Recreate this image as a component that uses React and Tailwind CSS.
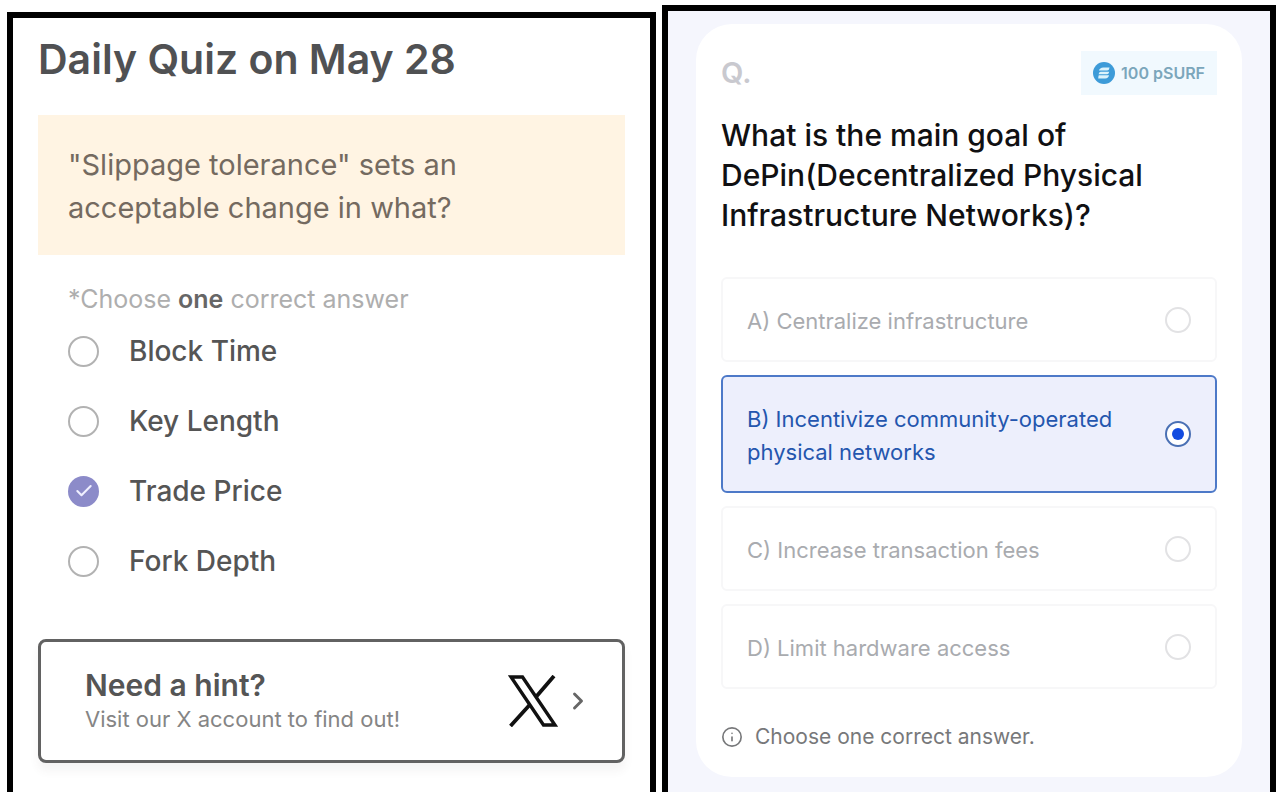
import { useState } from "react";
import { Check, ChevronRight, Info } from "lucide-react";

const dailyAnswers = ["Block Time", "Key Length", "Trade Price", "Fork Depth"];

const surfAnswers = [
  "A) Centralize infrastructure",
  "B) Incentivize community-operated physical networks",
  "C) Increase transaction fees",
  "D) Limit hardware access",
];

function XLogo() {
  return (
    <svg viewBox="0 0 50 52" className="h-[52px] w-[50px]" fill="none" stroke="#111" aria-hidden="true">
      <path d="M3 2H14.5L47 50H35.5Z" strokeWidth="3.4" />
      <path d="M46 1L27.5 22.5M22 29.5L2.5 51" strokeWidth="3.8" />
    </svg>
  );
}

function SurfCoin() {
  return (
    <svg viewBox="0 0 22 22" className="size-[22px]" aria-hidden="true">
      <circle cx="11" cy="11" r="11" fill="#3d9bd8" />
      <path
        d="M16.6 5.4H10.4Q6.6 5.6 6 8.6H14.2Q16.2 8.2 16.6 5.4ZM16.2 9.7H7.6Q5.8 10 5.6 12.2H14.2Q16 11.8 16.2 9.7ZM16 13.2H5.8Q5.4 13.8 5.2 16.4H12.2Q15.6 16.2 16 13.2Z"
        fill="#dcf3fb"
      />
    </svg>
  );
}

function DailyQuiz() {
  const [answer, setAnswer] = useState("Trade Price");
  return (
    <section className="mt-3 border-6 border-b-0 border-black bg-white px-[25px] pt-4">
      <h1 className="text-[41px] leading-[50px] font-semibold text-[#505153]">Daily Quiz on May 28</h1>
      <p className="mt-[31px] bg-[#fff4e3] px-[30px] pt-7 pb-[26px] text-[29px] leading-[43px] text-[#746a60]">
        "Slippage tolerance" sets an
        <br />
        acceptable change in what?
      </p>
      <fieldset className="mt-7 px-[30px]">
        <legend className="text-[25px] leading-8 text-[#aeaeae]">
          *Choose <strong className="font-semibold text-[#666]">one</strong> correct answer
        </legend>
        <div className="mt-4 flex flex-col gap-[30px]">
          {dailyAnswers.map((text) => (
            <label key={text} className="flex h-10 items-center gap-[30px] text-[28px] font-medium text-[#555]">
              <span className="relative flex">
                <input
                  type="radio"
                  name="daily"
                  checked={answer === text}
                  onChange={() => setAnswer(text)}
                  className="peer size-[31px] appearance-none rounded-full border-2 border-[#b2b2b2] bg-white checked:border-[#8c8bc9] checked:bg-[#8c8bc9]"
                />
                <Check
                  className="pointer-events-none absolute inset-0 m-auto hidden size-5 text-[#f0f0ff] peer-checked:block"
                  strokeWidth={2.5}
                />
              </span>
              {text}
            </label>
          ))}
        </div>
      </fieldset>
      <a
        href="#hint"
        className="mt-[58px] flex h-[124px] items-center rounded-lg border-3 border-[#626262] bg-white pr-[30px] pl-11 shadow-[0_8px_10px_rgba(80,60,60,0.06)]"
      >
        <span className="flex-1">
          <span className="block text-[30px] leading-9 font-semibold text-[#555]">Need a hint?</span>
          <span className="block text-[22px] leading-8 text-[#858585]">Visit our X account to find out!</span>
        </span>
        <XLogo />
        <ChevronRight className="ml-1.5 size-7 text-[#666]" strokeWidth={2.5} />
      </a>
    </section>
  );
}

function SurfQuiz() {
  const [answer, setAnswer] = useState(surfAnswers[1]);
  return (
    <section className="mt-[5px] border-6 border-b-0 border-black bg-[#f5f6fd] px-7 pt-[13px] pb-4">
      <div className="rounded-[36px] bg-white px-[25px] pt-[27px] pb-6">
        <div className="flex items-center justify-between">
          <span className="text-[29px] font-semibold text-[#c9c9cf]">Q.</span>
          <span className="flex h-11 items-center gap-1.5 bg-[#f1f9fe] px-3 text-base font-semibold text-[#7ba6bb]">
            <SurfCoin />
            100 pSURF
          </span>
        </div>
        <h2 className="mt-5 text-[30px] leading-10 font-medium text-[#101012]">
          What is the main goal of
          <br />
          DePin(Decentralized Physical
          <br />
          Infrastructure Networks)?
        </h2>
        <fieldset className="mt-[42px] flex flex-col gap-[13px]">
          {surfAnswers.map((text) => (
            <label
              key={text}
              className="flex items-center justify-between rounded-md border-2 border-[#f7f7f8] px-6 text-[22px] leading-[33px] text-[#a9abaf] has-checked:border-[#4d79c8] has-checked:bg-[#edeffc] has-checked:text-[#2456ae]"
            >
              <span className="max-w-[380px] pt-[26px] pb-[22px]">{text}</span>
              <span className="relative flex">
                <input
                  type="radio"
                  name="surf"
                  checked={answer === text}
                  onChange={() => setAnswer(text)}
                  className="peer size-[26px] appearance-none rounded-full border-2 border-[#e2e2e4] bg-white checked:border-[#4a70b4]"
                />
                <span className="pointer-events-none absolute inset-0 m-auto hidden size-3 rounded-full bg-[#124be0] peer-checked:block" />
              </span>
            </label>
          ))}
        </fieldset>
        <p className="mt-8 flex items-center gap-3 text-[21px] leading-8 text-[#77787a]">
          <Info className="size-[22px]" strokeWidth={1.8} />
          Choose one correct answer.
        </p>
      </div>
    </section>
  );
}

export default function App() {
  return (
    <main className="grid min-h-screen grid-cols-[649fr_614fr] gap-1.5 bg-white pr-1 pl-[7px] font-['Inter',sans-serif]">
      <DailyQuiz />
      <SurfQuiz />
    </main>
  );
}
